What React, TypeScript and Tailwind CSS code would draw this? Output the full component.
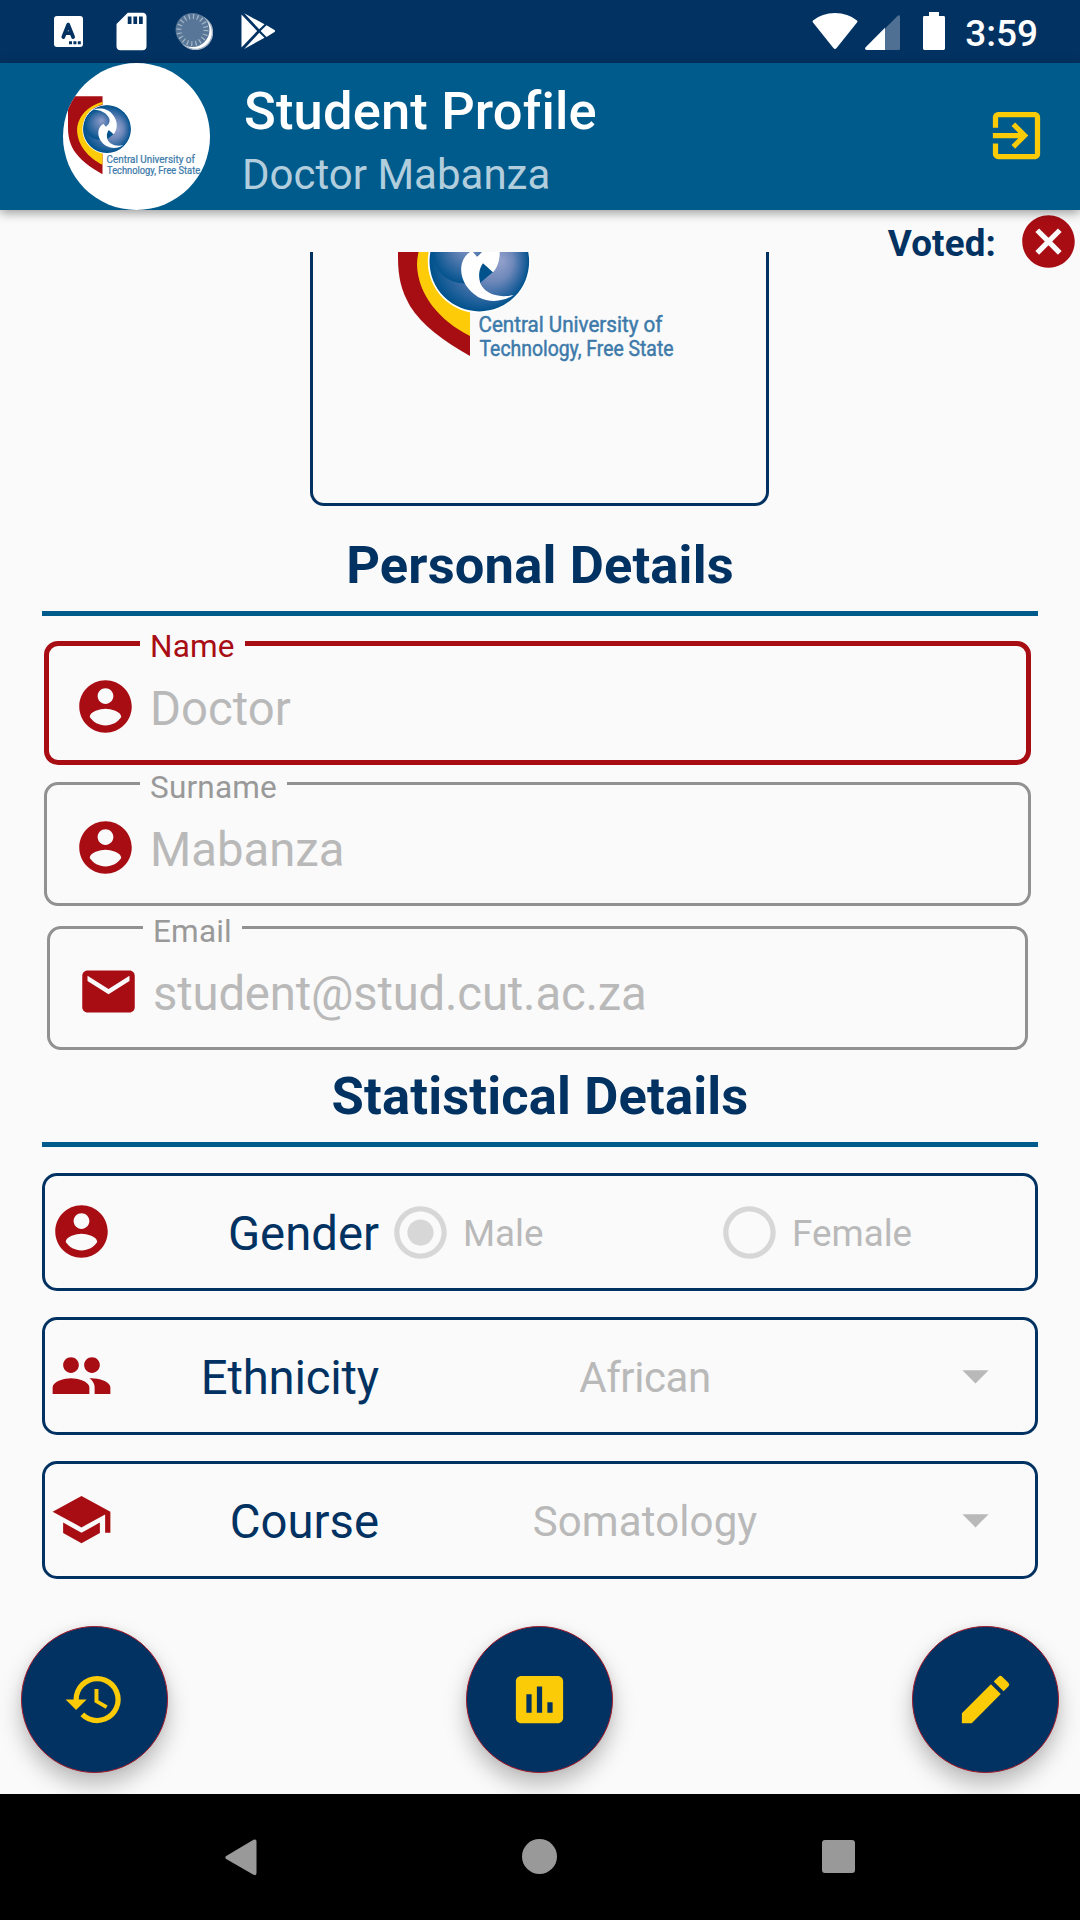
import type { ReactNode } from "react";
import {
  MdArrowDropDown,
  MdAssessment,
  MdCancel,
  MdEdit,
  MdEmail,
  MdExitToApp,
  MdHistory,
  MdPeople,
  MdRadioButtonChecked,
  MdRadioButtonUnchecked,
  MdSchool,
  MdSdCard,
} from "react-icons/md";

const ICON = 63;

function AccountIcon() {
  return (
    <svg viewBox="0 0 24 24" className="h-[63px] w-[63px] shrink-0" fill="#a90d14">
      <path d="M12 2C6.48 2 2 6.48 2 12s4.48 10 10 10 10-4.48 10-10S17.52 2 12 2zm0 3c1.66 0 3 1.34 3 3s-1.34 3-3 3-3-1.34-3-3 1.34-3 3-3zm0 14.2c-2.5 0-4.71-1.28-6-3.22.03-1.99 4-3.08 6-3.08 1.99 0 5.97 1.09 6 3.08-1.29 1.94-3.5 3.22-6 3.22z" />
    </svg>
  );
}

function Logo({ id, viewBox, className }: { id: string; viewBox: string; className: string }) {
  return (
    <svg viewBox={viewBox} className={className}>
      <defs>
        <radialGradient id={id + "a"} gradientUnits="userSpaceOnUse" cx="82" cy="68.6" r="49.5" fx="104" fy="68">
          <stop offset="0" stopColor="#92a0cb" />
          <stop offset="0.4" stopColor="#6f89ba" />
          <stop offset="0.75" stopColor="#2f67a1" />
          <stop offset="1" stopColor="#00528d" />
        </radialGradient>
        <radialGradient id={id + "b"} gradientUnits="userSpaceOnUse" cx="66" cy="59" r="32" fx="70" fy="50">
          <stop offset="0" stopColor="#8e9dc9" />
          <stop offset="0.45" stopColor="#5279ae" />
          <stop offset="1" stopColor="#00528d" />
        </radialGradient>
      </defs>
      <path d="M0 0H72V163C45 148 24 132 12 113C3 97 0 84 0 64Z" fill="#a60e13" />
      <path d="M72 12C40 20 19 44 19 72C20 102 42 128 72 143V119C50 112 31 94 31 68C31 44 46 24 72 17Z" fill="#fecb08" />
      <circle cx="81.3" cy="68.6" r="51.5" fill="#fff" />
      <circle cx="81.3" cy="68.6" r="49.8" fill="#00528d" />
      <circle cx="81.3" cy="68.6" r="49" fill={`url(#${id}a)`} />
      <circle cx="66" cy="59" r="31.5" fill={`url(#${id}b)`} />
      <path d="M85 70L81 80L82 90L95 79Z" fill="#00528d" />
      <path
        d="M52 28C66 23 84 26 93 38C101 47 103 58 101 67C100 72 98 76 95 79.3L85 70.3C81 75 80 83 82.3 90.3C86 99 98 106 115.6 102C105 109 92 110 80 104C69 97 62 86 63.3 73.7C64 66 69 60 74 58L79 63.7C87 58 89 50 84 43C78 34 68 29 52 28Z"
        fill="#fff"
      />
      <g fill="#3d7aaa" fontFamily="Roboto, sans-serif" fontSize="21.5" stroke="#3d7aaa" strokeWidth="0.5">
        <text x="80.5" y="138.8" textLength="184" lengthAdjust="spacingAndGlyphs">Central University of</text>
        <text x="81.5" y="162.8" textLength="194" lengthAdjust="spacingAndGlyphs">Technology, Free State</text>
      </g>
    </svg>
  );
}

function StatusBar() {
  return (
    <div className="flex h-[63px] items-start bg-[#023262] text-white">
      <div className="ml-[54px] mt-4 flex h-[31px] w-[29px] shrink-0 rounded-[3px] bg-white">
        <svg viewBox="0 0 29 31" className="h-[31px] w-[29px]">
          <path d="M9.3 21L14.2 8.6L19.1 21M11 17.2H17.4" fill="none" stroke="#023262" strokeWidth="3.8" strokeLinecap="round" strokeLinejoin="round" />
          <path d="M15 25.3h3v3h-3zM19.4 25.3h3v3h-3zM23.8 25.3h3v3h-3z" fill="#023262" />
        </svg>
      </div>
      <MdSdCard size={45} className="ml-[26px] mt-[9px] shrink-0" />
      <svg viewBox="0 0 38 38" className="ml-[21px] mt-3 h-[38px] w-[38px] shrink-0">
        <circle cx="20.5" cy="20.5" r="16.8" fill="#fff" />
        <circle cx="20.5" cy="20.5" r="17" fill="none" stroke="#a3b3c5" strokeWidth="1.4" />
        <circle cx="17.5" cy="18" r="17" fill="#577698" />
        <circle cx="17.5" cy="18" r="13.5" fill="none" stroke="#a6b6c7" strokeWidth="5" strokeDasharray="1.2 3.04" />
      </svg>
      <svg viewBox="0 0 36 38" className="ml-[28px] mt-3 h-[38px] w-9 shrink-0" fill="#fff">
        <path d="M0.5 2.5L16.2 19L0.5 35.5ZM3.2 1.2L23.5 12.3L18.2 17.2ZM25.5 13.3L33.5 18Q34.8 19 33.5 20L25.5 25L19.6 19ZM3.2 37L23.5 25.8L18.2 20.8Z" />
      </svg>
      <svg viewBox="0 0 46 37" className="ml-auto mt-[13px] h-[37px] w-[46px] shrink-0" fill="#fff">
        <path d="M1 7.5Q10 0 23 0T45 7.5Q46 8.4 45 9.6L24.6 35Q23 37 21.4 35L1 9.6Q0 8.4 1 7.5Z" />
      </svg>
      <svg viewBox="0 0 35 35" className="ml-[7px] mt-[15px] h-[35px] w-[35px] shrink-0">
        <path d="M20 13.5L33 0.6Q35 -0.4 35 1.8V33.5Q35 35 33.5 35H20Z" fill="#4f7093" />
        <path d="M20 12.8V35H1.5Q-0.6 34.5 0.4 32.4Z" fill="#fff" />
      </svg>
      <svg viewBox="0 0 22 38" className="ml-[23px] mt-3 h-[38px] w-[22px] shrink-0" fill="#fff">
        <path d="M6 0H16V4H20.6Q22 4 22 5.4V36.6Q22 38 20.6 38H1.4Q0 38 0 36.6V5.4Q0 4 1.4 4H6Z" />
      </svg>
      <span className="ml-[20px] mr-[42px] mt-[12px] text-[37px] font-medium leading-[44px]">3:59</span>
    </div>
  );
}

function Header() {
  return (
    <header className="relative z-10 flex h-[147px] items-start bg-[#005b8d] shadow-[0_3px_10px_rgba(0,0,0,0.38)]">
      <div className="ml-[63px] h-[147px] w-[147px] shrink-0 overflow-hidden rounded-full bg-white">
        <Logo id="avatar" viewBox="0 0 294 189" className="ml-[5px] mt-[33px] h-[91px] w-[141px] max-w-none" />
      </div>
      <div className="ml-[32px] mt-[18px]">
        <h1 className="ml-[2px] text-[52.5px] font-medium leading-[60px] tracking-[0.15px] text-white">Student Profile</h1>
        <p className="mt-[9px] text-[42px] leading-[50px] text-[#b2cedd]">Doctor Mabanza</p>
      </div>
      <MdExitToApp size={ICON} className="ml-auto mr-8 mt-[41px] shrink-0 text-[#fccb08]" />
    </header>
  );
}

function SectionTitle({ children }: { children: string }) {
  return (
    <>
      <h2 className="text-center text-[52.5px] font-bold leading-[62px] tracking-[0.15px] text-[#023262]">{children}</h2>
      <div className="mx-[42px] mt-[15px] h-[5px] bg-[#005b8d]" />
    </>
  );
}

function Field({ label, value, icon, className, valueClass = "", active = false }: { label: string; value: string; icon: ReactNode; className: string; valueClass?: string; active?: boolean }) {
  return (
    <div className={`relative flex h-[124px] items-center pl-[30px] pt-[7px] ${className}`}>
      <div className={`absolute inset-0 rounded-[14px] ${active ? "border-5 border-[#a90d14]" : "border-3 border-[#919191]"}`} />
      <span className={`absolute -top-[12px] left-24 bg-[#fafafa] px-[10px] text-[31.5px] leading-9 tracking-[0.2px] ${active ? "text-[#a90d14]" : "text-[#999999]"}`}>{label}</span>
      {icon}
      <span className={`ml-[13px] pt-[5px] text-[47.25px] leading-[56px] text-[#b9b9b9] ${valueClass}`}>{value}</span>
    </div>
  );
}

function DetailRow({ icon, label, labelClass = "", children }: { icon: ReactNode; label: string; labelClass?: string; children: ReactNode }) {
  return (
    <div className="flex h-[118px] items-center rounded-[15px] border-3 border-[#023262] pl-[5px]">
      <div className="mb-[2px] shrink-0">{icon}</div>
      <span className={`w-[266px] shrink-0 pt-[4px] text-right text-[47.25px] leading-[56px] text-[#023262] ${labelClass}`}>{label}</span>
      {children}
    </div>
  );
}

function Radio({ label, checked = false }: { label: string; checked?: boolean }) {
  const Icon = checked ? MdRadioButtonChecked : MdRadioButtonUnchecked;
  return (
    <div className="flex w-[329px] shrink-0 items-center">
      <Icon size={ICON} className="shrink-0 text-[#d7d7d7]" />
      <span className="ml-[11px] pt-[3px] text-[36.75px] leading-[44px] text-[#b9b9b9]">{label}</span>
    </div>
  );
}

function Select({ value, valueClass }: { value: string; valueClass: string }) {
  return (
    <>
      <span className={`w-[532px] shrink-0 pt-[3px] text-center text-[42px] leading-[50px] text-[#b9b9b9] ${valueClass}`}>{value}</span>
      <MdArrowDropDown size={ICON} className="mb-[2px] ml-[33px] shrink-0 text-[#b9b9b9]" />
    </>
  );
}

function Fab({ children }: { children: ReactNode }) {
  return (
    <button className="flex h-[147px] w-[147px] items-center justify-center rounded-full border border-[#a3182a] bg-[#023262] text-[#fccb08] shadow-[0_12px_22px_rgba(0,0,0,0.25),0_0_8px_rgba(0,0,0,0.06)]">
      {children}
    </button>
  );
}

export default function App() {
  const red = "shrink-0 text-[#a90d14]";
  return (
    <div className="flex h-[1920px] w-[1080px] flex-col overflow-hidden bg-[#fafafa] font-['Roboto',sans-serif]">
      <StatusBar />
      <Header />
      <main className="h-[1584px] overflow-hidden">
        <div className="flex h-[42px] items-start justify-end">
          <span className="mr-[21px] mt-[12px] text-[36.75px] font-bold leading-[43px] tracking-[0.15px] text-[#023262]">Voted:</span>
          <MdCancel size={ICON} className={red} />
        </div>
        <div className="ml-[310px] h-[254px] w-[459px] rounded-b-[14px] border-x-3 border-b-3 border-[#023262]">
          <Logo id="card" viewBox="0 59 294 120" className="ml-[85px] h-[120px] w-[294px]" />
        </div>
        <section className="mt-7">
          <SectionTitle>Personal Details</SectionTitle>
          <Field active label="Name" value="Doctor" className="ml-11 mt-[25px] w-[987px]" icon={<AccountIcon />} />
          <Field label="Surname" value="Mabanza" className="ml-11 mt-[17px] w-[987px]" icon={<AccountIcon />} />
          <Field
            label="Email"
            value="student@stud.cut.ac.za"
            valueClass="tracking-[-0.17px]"
            className="ml-[47px] mt-5 w-[981px]"
            icon={<MdEmail size={ICON} className={red} />}
          />
        </section>
        <section className="mt-[15px]">
          <SectionTitle>Statistical Details</SectionTitle>
          <div className="mx-[42px] mt-[26px] flex flex-col gap-[26px]">
            <DetailRow label="Gender" icon={<AccountIcon />}>
              <div className="ml-[10px] flex">
                <Radio label="Male" checked />
                <Radio label="Female" />
              </div>
            </DetailRow>
            <DetailRow label="Ethnicity" labelClass="tracking-[-0.2px]" icon={<MdPeople size={ICON} className={red} />}>
              <Select value="African" valueClass="tracking-[-0.4px]" />
            </DetailRow>
            <DetailRow label="Course" icon={<MdSchool size={ICON} className={red} />}>
              <Select value="Somatology" valueClass="tracking-[0.12px]" />
            </DetailRow>
          </div>
        </section>
        <div className="mt-[47px] flex gap-[298px] pl-[21px]">
          <Fab><MdHistory size={ICON} /></Fab>
          <Fab><MdAssessment size={ICON} /></Fab>
          <div className="ml-px"><Fab><MdEdit size={ICON} /></Fab></div>
        </div>
      </main>
      <nav className="relative flex h-[126px] items-center bg-black">
        <svg viewBox="0 0 32 37" className="ml-[225px] h-[37px] w-8" fill="#999">
          <path d="M1.2 17L28.5 0.8Q31.5 -0.4 31.5 2.5V34Q31.5 37 28.5 35.8L1.2 20Q-0.6 18.5 1.2 17Z" />
        </svg>
        <div className="mb-px ml-[265px] h-[35px] w-[35px] rounded-full bg-[#999]" />
        <div className="mb-px ml-[265px] h-[33px] w-[33px] rounded-[3px] bg-[#999]" />
      </nav>
    </div>
  );
}
